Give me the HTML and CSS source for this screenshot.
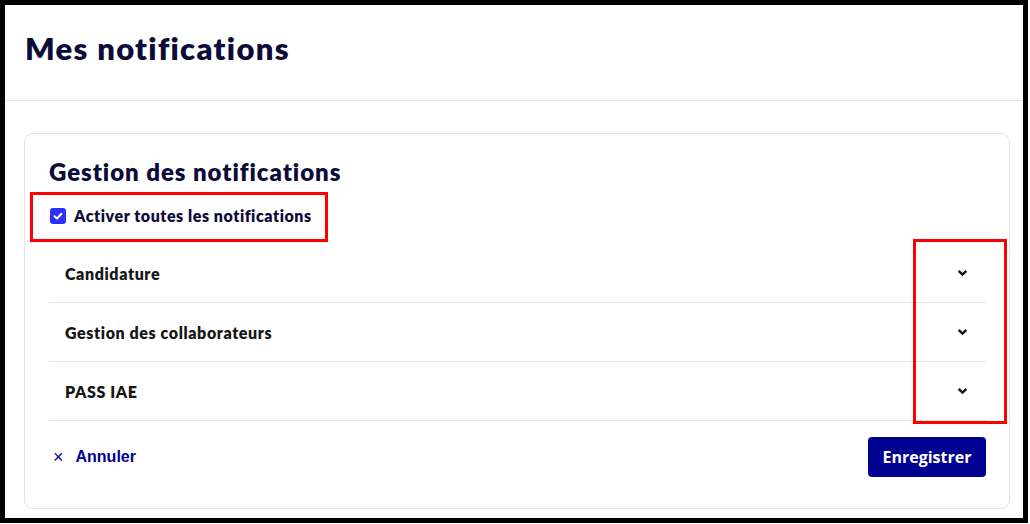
FILE: index.html
```html
<!DOCTYPE html>
<html lang="fr">
<head>
<meta charset="utf-8">
<title>Mes notifications</title>
<link rel="stylesheet" href="styles.css">
</head>
<body>
<div class="frame">
  <header class="page-header">
    <h1 class="page-title">Mes notifications</h1>
  </header>
  <main class="page-main">
    <section class="card">
      <h2 class="card-title">Gestion des notifications</h2>
      <label class="check-all">
        <span class="checkbox">
          <svg viewBox="0 0 16 16" width="16" height="16"><path d="M4.5 8.2 L7 10.5 L11.5 5.8" fill="none" stroke="#fff" stroke-width="2" stroke-linecap="round" stroke-linejoin="round"/></svg>
        </span>
        <span>Activer toutes les notifications</span>
      </label>
      <ul class="accordion">
        <li class="acc-row"><span>Candidature</span><svg class="chev" viewBox="0 0 10 7" width="10" height="7"><path d="M1.5 1.5 L5 5 L8.5 1.5" fill="none" stroke="#161616" stroke-width="2.2"/></svg></li>
        <li class="acc-row"><span>Gestion des collaborateurs</span><svg class="chev" viewBox="0 0 10 7" width="10" height="7"><path d="M1.5 1.5 L5 5 L8.5 1.5" fill="none" stroke="#161616" stroke-width="2.2"/></svg></li>
        <li class="acc-row"><span>PASS IAE</span><svg class="chev" viewBox="0 0 10 7" width="10" height="7"><path d="M1.5 1.5 L5 5 L8.5 1.5" fill="none" stroke="#161616" stroke-width="2.2"/></svg></li>
      </ul>
      <div class="actions">
        <a class="cancel" href="#"><span class="cancel-x">×</span>Annuler</a>
        <button class="save" type="button">Enregistrer</button>
      </div>
    </section>
  </main>
  <div class="mark mark-check"></div>
  <div class="mark mark-chev"></div>
</div>
</body>
</html>
```

FILE: styles.css
```css
* { box-sizing: border-box; }
html, body { margin: 0; padding: 0; background: #fff; }
body { font-family: "Lato", "Noto Sans", sans-serif; color: #161616; }
.frame {
  position: relative;
  width: 1028px;
  height: 523px;
  border: 5px solid #000;
  background: #fff;
  overflow: hidden;
}
.page-header {
  height: 96px;
  border-bottom: 1px solid #e5e5e5;
  padding: 23px 0 0 20px;
}
.page-title {
  margin: 0;
  font-size: 31px;
  line-height: 40px;
  font-weight: 800;
  color: #0c0c3a;
  letter-spacing: 1.3px;
}
.page-main {
  padding: 32px 13px 0 19px;
}
.card {
  border: 1px solid #e5e5e5;
  border-radius: 9px;
  height: 376px;
  padding: 22px 23px 0 24px;
}
.card-title {
  margin: 0;
  font-size: 24px;
  line-height: 32px;
  font-weight: 800;
  color: #0c0c3a;
  letter-spacing: 0.95px;
}
.check-all {
  display: flex;
  align-items: center;
  gap: 8px;
  margin: 16px 0 0 1px;
  font-size: 16px;
  font-weight: 800;
  color: #0c0c3a;
  line-height: 24px;
  letter-spacing: 0.55px;
}
.checkbox {
  width: 16px;
  height: 16px;
  border-radius: 3px;
  background: #2f2ff5;
  display: flex;
}
.accordion {
  list-style: none;
  margin: 16px 0 0 0;
  padding: 0;
}
.acc-row {
  display: flex;
  align-items: center;
  justify-content: space-between;
  height: 59px;
  padding: 0 18px 0 16px;
  border-bottom: 1px solid #e5e5e5;
  font-size: 16px;
  font-weight: 800;
  color: #161616;
  letter-spacing: 0.6px;
}
.chev { width: 11px; height: 8px; }
.actions {
  display: flex;
  align-items: center;
  justify-content: space-between;
  margin-top: 16px;
}
.cancel {
  display: flex;
  align-items: center;
  gap: 12px;
  padding-left: 4px;
  color: #000091;
  font-family: "Liberation Sans", Arial, sans-serif;
  font-weight: 700;
  font-size: 16px;
  text-decoration: none;
}
.cancel-x { font-weight: 400; font-size: 18px; }
.save {
  height: 40px;
  width: 118px;
  border: 0;
  border-radius: 4px;
  background: #000091;
  color: #fff;
  font-family: "Open Sans", sans-serif;
  font-size: 16px;
  font-weight: 700;
}
.mark {
  position: absolute;
  border: 3px solid #ff0000;
}
.mark-check { left: 25px; top: 187px; width: 298px; height: 50px; }
.mark-chev { left: 908px; top: 234px; width: 94px; height: 185px; }
```
